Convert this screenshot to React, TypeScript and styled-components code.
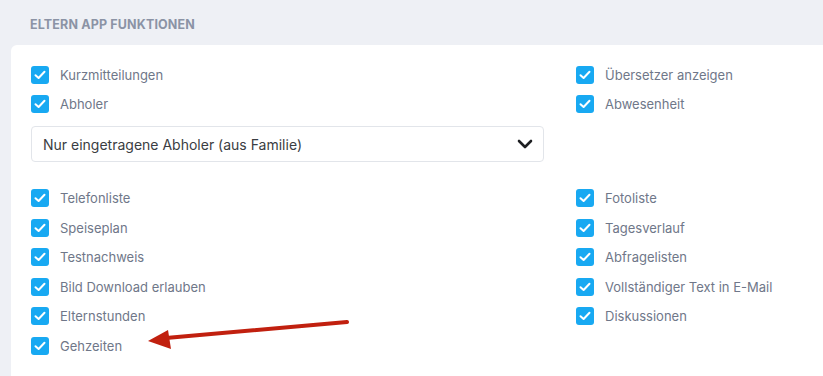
import React from "react";
import styled, { createGlobalStyle } from "styled-components";

const GlobalStyle = createGlobalStyle`
  html, body {
    margin: 0;
    padding: 0;
    background: #eef0f5;
    font-family: Inter, "Noto Sans", "Liberation Sans", sans-serif;
    overflow: hidden;
  }
`;

const Page = styled.div`
  position: relative;
  width: 823px;
  height: 376px;
  overflow: hidden;
  background: #eef0f5;
`;

const Title = styled.h2`
  margin: 0;
  padding: 17px 0 0 30px;
  height: 28px;
  font-size: 12.5px;
  font-weight: 700;
  letter-spacing: 0.15px;
  color: #8b93a5;
  line-height: 16px;
`;

const Card = styled.div`
  margin-left: 11px;
  width: 1000px;
  min-height: 400px;
  background: #ffffff;
  border-radius: 6px 0 0 0;
  padding: 15px 20px 0 20px;
  box-sizing: border-box;
`;

const Section = styled.div`
  display: grid;
  grid-template-columns: 513px 1fr;
  column-gap: 32px;
`;

const Column = styled.div`
  display: flex;
  flex-direction: column;
`;

const Row = styled.label`
  display: flex;
  align-items: center;
  gap: 11px;
  height: 29.6px;
  font-size: 13px;
  color: #6f7789;
`;

const Box = styled.span`
  width: 18px;
  height: 18px;
  border-radius: 3px;
  background: #18a9f2;
  display: flex;
  align-items: center;
  justify-content: center;
  flex-shrink: 0;
`;

const Select = styled.div`
  margin: 7px 0 21px;
  height: 36px;
  border: 1px solid #e2e5ea;
  border-radius: 4px;
  box-sizing: border-box;
  display: flex;
  align-items: center;
  justify-content: space-between;
  padding: 0 10px 0 11px;
  font-size: 14px;
  color: #3a3d42;
`;

const Arrow = styled.svg`
  position: absolute;
  left: 140px;
  top: 315px;
`;

const Check = ({ label }: { label: string }) => (
  <Row>
    <Box>
      <svg width="12" height="10" viewBox="0 0 12 10">
        <path
          d="M1.5 5.2 L4.6 8 L10.5 1.8"
          fill="none"
          stroke="#ffffff"
          strokeWidth="2"
          strokeLinecap="round"
          strokeLinejoin="round"
        />
      </svg>
    </Box>
    {label}
  </Row>
);

export default function App() {
  return (
    <Page>
      <GlobalStyle />
      <Title>ELTERN APP FUNKTIONEN</Title>
      <Card>
        <Section>
          <Column>
            <Check label="Kurzmitteilungen" />
            <Check label="Abholer" />
            <Select>
              Nur eingetragene Abholer (aus Familie)
              <svg width="16" height="10" viewBox="0 0 16 10">
                <path
                  d="M2 2 L8 8 L14 2"
                  fill="none"
                  stroke="#1e1f22"
                  strokeWidth="2.6"
                  strokeLinecap="round"
                  strokeLinejoin="round"
                />
              </svg>
            </Select>
          </Column>
          <Column>
            <Check label="Übersetzer anzeigen" />
            <Check label="Abwesenheit" />
          </Column>
        </Section>
        <Section>
          <Column>
            <Check label="Telefonliste" />
            <Check label="Speiseplan" />
            <Check label="Testnachweis" />
            <Check label="Bild Download erlauben" />
            <Check label="Elternstunden" />
            <Check label="Gehzeiten" />
          </Column>
          <Column>
            <Check label="Fotoliste" />
            <Check label="Tagesverlauf" />
            <Check label="Abfragelisten" />
            <Check label="Vollständiger Text in E-Mail" />
            <Check label="Diskussionen" />
          </Column>
        </Section>
      </Card>
      <Arrow width="212" height="40" viewBox="0 0 212 40">
        <line x1="26" y1="23" x2="207" y2="7" stroke="#c1200f" strokeWidth="4" strokeLinecap="round" />
        <polygon points="8,26 28,15 31,34" fill="#c1200f" />
      </Arrow>
    </Page>
  );
}
